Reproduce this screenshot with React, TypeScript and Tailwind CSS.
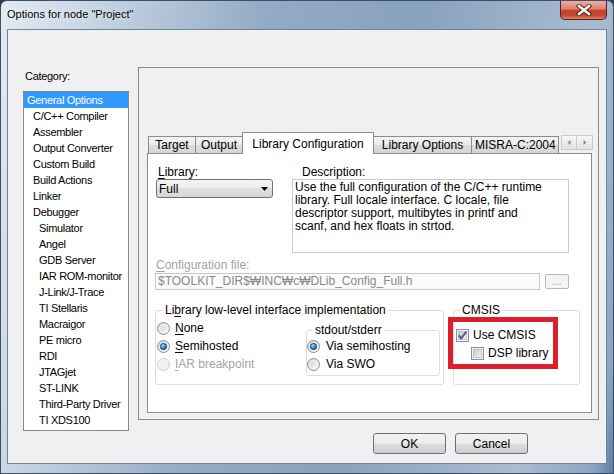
import React from 'react'

const categories: [string, number][] = [
  ['General Options', 0],
  ['C/C++ Compiler', 1],
  ['Assembler', 1],
  ['Output Converter', 1],
  ['Custom Build', 1],
  ['Build Actions', 1],
  ['Linker', 1],
  ['Debugger', 1],
  ['Simulator', 2],
  ['Angel', 2],
  ['GDB Server', 2],
  ['IAR ROM-monitor', 2],
  ['J-Link/J-Trace', 2],
  ['TI Stellaris', 2],
  ['Macraigor', 2],
  ['PE micro', 2],
  ['RDI', 2],
  ['JTAGjet', 2],
  ['ST-LINK', 2],
  ['Third-Party Driver', 2],
  ['TI XDS100', 2],
]

const indent = ['pl-[3px]', 'pl-[9px]', 'pl-[15px]']

function Radio({ checked = false, disabled = false }: { checked?: boolean; disabled?: boolean }) {
  return (
    <svg width="13" height="13" viewBox="0 0 13 13" className="shrink-0">
      <defs>
        <linearGradient id="radioFill" x1="0" y1="0" x2="1" y2="1">
          <stop offset="0" stopColor="#cfcfcf" />
          <stop offset="1" stopColor="#fbfbfb" />
        </linearGradient>
        <radialGradient id="radioDot" cx="0.4" cy="0.35" r="0.75">
          <stop offset="0" stopColor="#a9d6ff" />
          <stop offset="0.5" stopColor="#3d82d1" />
          <stop offset="1" stopColor="#16427f" />
        </radialGradient>
      </defs>
      <circle cx="6.5" cy="6.5" r="6" fill={disabled ? '#f2f2f2' : 'url(#radioFill)'} stroke={disabled ? '#cacaca' : '#8e8f8f'} />
      {!disabled && <circle cx="6.5" cy="6.5" r="4" fill="none" stroke="#f7f7f7" strokeWidth="0.8" />}
      {checked && <circle cx="6.5" cy="6.5" r="3.2" fill="url(#radioDot)" stroke="#1d3f6e" strokeWidth="0.7" />}
    </svg>
  )
}

function Check({ checked = false }: { checked?: boolean }) {
  return (
    <svg width="13" height="13" viewBox="0 0 13 13" className="shrink-0">
      <defs>
        <linearGradient id="checkFill" x1="0" y1="0" x2="1" y2="1">
          <stop offset="0" stopColor="#c4c8cd" />
          <stop offset="1" stopColor="#f5f5f5" />
        </linearGradient>
      </defs>
      <rect x="0.5" y="0.5" width="12" height="12" fill="#f4f4f4" stroke="#8e8f8f" />
      <rect x="2.5" y="2.5" width="8" height="8" fill="url(#checkFill)" stroke="#b4b8bd" strokeWidth="0.8" />
      {checked && <path d="M2.8 6.3 L5.3 9.4 L10.3 2.6" fill="none" stroke="#4b5d8c" strokeWidth="2" />}
    </svg>
  )
}

function App() {
  const btn =
    'w-[73px] h-[21px] rounded-[3px] border border-[#707070] bg-[linear-gradient(180deg,#f2f2f2_0%,#ebebeb_50%,#dddddd_50%,#cfcfcf_100%)] text-[12px] text-black flex items-center justify-center'
  const tabOff =
    'h-[17px] -ml-px border border-b-0 border-[#898c95] bg-[linear-gradient(180deg,#f3f3f3_0%,#ebebeb_50%,#dddddd_50%,#d5d5d5_100%)] flex items-center justify-center text-[12px] whitespace-nowrap overflow-hidden'

  return (
    <div className="w-[614px] h-[474px] bg-[#2e3b4a] font-['Liberation_Sans',Arial,sans-serif] text-black">
      <div className="w-[614px] h-[474px] rounded-t-[7px] border border-[#3f4f63] bg-[linear-gradient(100deg,#e3eaf2_0%,#c6d4e3_14%,#94abc5_38%,#88a1bd_60%,#a9bcd1_86%,#8aa5c4_97%,#5c7ea5_100%)] overflow-hidden">
        {/* Title bar */}
        <div className="h-[28px] flex items-start justify-between">
          <div className="pl-[6px] pt-[6px] text-[11px] leading-[14px] [text-shadow:0_0_6px_#ffffff]">
            Options for node "Project"
          </div>
          <div className="mr-[6px] w-[47px] h-[19px] rounded-b-[5px] border border-t-0 border-[#5a2520] bg-[linear-gradient(180deg,#eab0a3_0%,#d9806c_45%,#c3412b_52%,#c4452e_78%,#e3805f_100%)] flex items-center justify-center">
            <svg width="16" height="12" viewBox="0 0 16 12">
              <path d="M3 2 L13 10 M13 2 L3 10" stroke="#4a1d18" strokeWidth="4.2" strokeLinecap="square" />
              <path d="M3 2 L13 10 M13 2 L3 10" stroke="#ffffff" strokeWidth="2.4" strokeLinecap="square" />
            </svg>
          </div>
        </div>

        {/* Client area */}
        <div className="ml-[6px] w-[600px] h-[435px] border border-[#6f839b] bg-[#f0f0f0]">
          <div className="flex items-start gap-[9px] pt-[37px] pl-[15px]">
            {/* Category */}
            <div className="w-[106px]">
              <div className="mt-[2px] h-[14px] leading-[14px] pl-[2px] text-[11px] tracking-[-0.3px]">Category:</div>
              <div className="mt-[8px] h-[340px] border border-[#828790] bg-white text-[11px] tracking-[-0.3px]">
                {categories.map(([name, level], i) => (
                  <div
                    key={name}
                    className={`h-[16px] leading-[16px] whitespace-nowrap ${indent[level]} ${
                      i === 0 ? 'bg-[#3399ff] text-white' : ''
                    }`}
                  >
                    {name}
                  </div>
                ))}
              </div>
            </div>

            {/* Options panel */}
            <div className="w-[461px] h-[353px] border border-[#8a8a8a] pt-[64px] pl-[8px]">
              <div className="w-[445px]">
                {/* Tabs */}
                <div className="relative z-10 flex items-end h-[21px] pl-[2px]">
                  <div className={`${tabOff} w-[48px]`}>Target</div>
                  <div className={`${tabOff} w-[48px]`}>Output</div>
                  <div className="h-[22px] -mb-px -ml-px w-[132px] border border-b-0 border-[#898c95] bg-white flex items-center justify-center text-[12px] whitespace-nowrap">
                    Library Configuration
                  </div>
                  <div className={`${tabOff} w-[99px]`}>Library Options</div>
                  <div className={`${tabOff} w-[88px] justify-start pl-[3px]`}>MISRA-C:2004</div>
                  <div className="ml-auto mb-[3px] mr-[-1px] flex">
                    <div className="w-[16px] h-[15px] border border-[#c9cbce] bg-[linear-gradient(180deg,#f6f6f6,#e2e2e2)] flex items-center justify-center">
                      <svg width="4" height="5" viewBox="0 0 4 5"><path d="M3.5 0 L0.5 2.5 L3.5 5 Z" fill="#8a8a8a" /></svg>
                    </div>
                    <div className="w-[16px] h-[15px] border border-l-0 border-[#c9cbce] bg-[linear-gradient(180deg,#f6f6f6,#e2e2e2)] flex items-center justify-center">
                      <svg width="4" height="5" viewBox="0 0 4 5"><path d="M0.5 0 L3.5 2.5 L0.5 5 Z" fill="#8a8a8a" /></svg>
                    </div>
                  </div>
                </div>

                {/* Tab page */}
                <div className="h-[260px] border border-[#898c95] bg-white text-[12px]">
                  <div className="flex mt-[11px] pl-[8px]">
                    <div className="w-[136px]">
                      <div className="h-[14px] leading-[14px] pl-[2px]">
                        <span className="underline underline-offset-[2px]">L</span>ibrary:
                      </div>
                      <div className="w-[117px] h-[19px] rounded-[3px] border border-[#707070] bg-[linear-gradient(180deg,#f4f4f4_0%,#ececec_50%,#e0e0e0_50%,#d6d6d6_100%)] flex items-center justify-between pl-[2px] pr-[4px]">
                        <span>Full</span>
                        <svg width="7" height="4" viewBox="0 0 7 4"><path d="M0 0 H7 L3.5 4 Z" fill="#000" /></svg>
                      </div>
                    </div>
                    <div>
                      <div className="h-[14px] leading-[14px] pl-[10px]">Description:</div>
                      <div className="w-[277px] h-[74px] border border-[#c7c9cc] bg-white pl-[2px] pt-[1px] leading-[13px] whitespace-nowrap">
                        <div>Use the full configuration of the C/C++ runtime</div>
                        <div>library. Full locale interface. C locale, file</div>
                        <div>descriptor support, multibytes in printf and</div>
                        <div>scanf, and hex floats in strtod.</div>
                      </div>
                    </div>
                  </div>

                  <div className="mt-[5px] pl-[8px] h-[14px] leading-[14px] text-[#a3a3a3]">
                    <span className="underline underline-offset-[2px]">C</span>onfiguration file:
                  </div>
                  <div className="flex items-start mt-[1px] pl-[7px]">
                    <div className="w-[385px] h-[17px] border border-[#c5c7ca] bg-[#fbfbfb] pl-[2px] leading-[15px] text-[#8a8a8a] whitespace-nowrap overflow-hidden">
                      $TOOLKIT_DIR$₩INC₩c₩DLib_Config_Full.h
                    </div>
                    <div className="ml-[5px] mt-[1px] w-[24px] h-[15px] rounded-[2px] border border-[#b5b9bd] bg-[#f4f4f4] text-[#a0a0a0] text-[11px] leading-[11px] flex items-center justify-center">
                      ...
                    </div>
                  </div>

                  <div className="flex mt-[13px] pl-[7px] gap-[9px]">
                    <fieldset className="w-[289px] h-[82px] border border-[#d5dfe5] rounded-[3px]">
                      <legend className="ml-[7px] px-[2px] leading-[14px]">
                        Li<span className="underline underline-offset-[2px]">b</span>rary low-level interface implementation
                      </legend>
                      <div className="flex">
                        <div className="w-[150px] pt-[2px] pl-[1px]">
                          <div className="h-[18px] flex items-center gap-[5px]">
                            <Radio />
                            <span><span className="underline underline-offset-[2px]">N</span>one</span>
                          </div>
                          <div className="h-[18px] flex items-center gap-[5px]">
                            <Radio checked />
                            <span><span className="underline underline-offset-[2px]">S</span>emihosted</span>
                          </div>
                          <div className="h-[18px] flex items-center gap-[5px] text-[#a3a3a3]">
                            <Radio disabled />
                            <span><span className="underline underline-offset-[2px]">I</span>AR breakpoint</span>
                          </div>
                        </div>
                        <fieldset className="mt-[6px] w-[134px] h-[53px] border border-[#d5dfe5] rounded-[3px]">
                          <legend className="ml-[6px] px-[2px] leading-[14px]">stdout/stderr</legend>
                          <div className="h-[18px] flex items-center gap-[6px]">
                            <Radio checked />
                            <span>Via semihosting</span>
                          </div>
                          <div className="h-[18px] flex items-center gap-[6px]">
                            <Radio />
                            <span>Via SWO</span>
                          </div>
                        </fieldset>
                      </div>
                    </fieldset>

                    <fieldset className="w-[127px] h-[82px] border border-[#d5dfe5] rounded-[3px]">
                      <legend className="ml-[6px] px-[2px] leading-[14px]">CMSIS</legend>
                      <div className="-ml-[6px] w-[110px] h-[52px] border-[5px] border-[#dc1f2b] pt-[4px]">
                        <div className="h-[18px] flex items-center gap-[4px] pl-[3px]">
                          <Check checked />
                          <span>Use CMSIS</span>
                        </div>
                        <div className="h-[18px] flex items-center gap-[4px] pl-[18px]">
                          <Check />
                          <span>DSP library</span>
                        </div>
                      </div>
                    </fieldset>
                  </div>
                </div>
              </div>
            </div>
          </div>

          {/* Buttons */}
          <div className="flex justify-end gap-[9px] mt-[2px] pr-[78px]">
            <button className={btn}>OK</button>
            <button className={btn}>Cancel</button>
          </div>
        </div>
      </div>
    </div>
  )
}

export default App
